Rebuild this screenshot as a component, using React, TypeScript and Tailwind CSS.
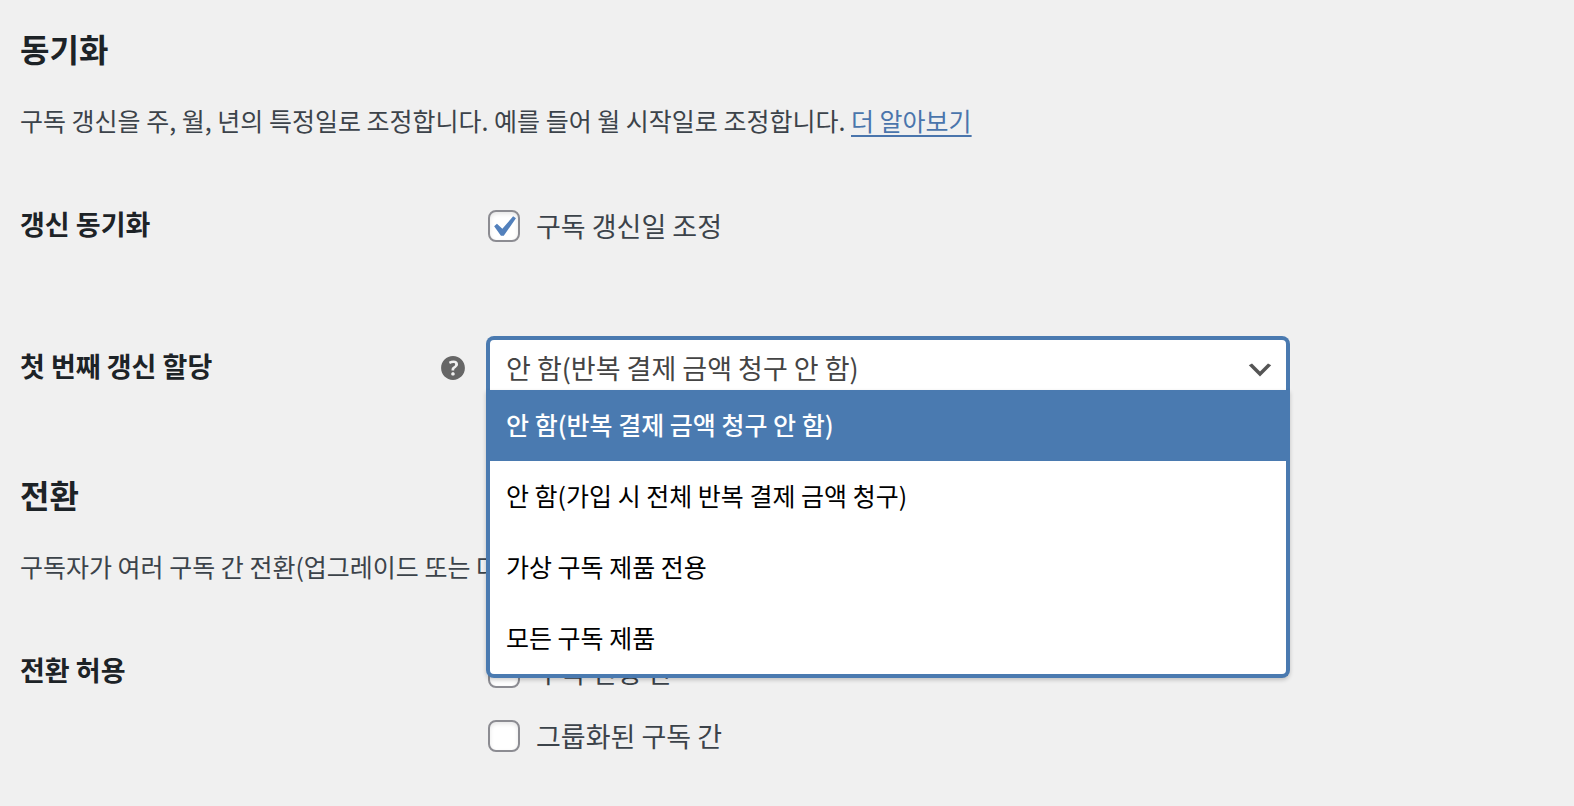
import React, { useState } from 'react';

const OPTIONS = [
    '안 함(반복 결제 금액 청구 안 함)',
    '안 함(가입 시 전체 반복 결제 금액 청구)',
    '가상 구독 제품 전용',
    '모든 구독 제품',
];

const HelpIcon: React.FC<{ className?: string }> = ({ className }) => (
    <svg viewBox="0 0 20 20" fill="currentColor" className={className} aria-hidden="true">
        <path d="M17 10c0-3.87-3.14-7-7-7-3.87 0-7 3.13-7 7s3.13 7 7 7c3.86 0 7-3.13 7-7zm-6.3 1.48H9.14v-.43c0-.38.08-.7.24-.98s.46-.57.88-.89c.41-.29.68-.53.81-.71.14-.18.2-.39.2-.62 0-.25-.09-.44-.28-.58-.19-.13-.45-.19-.79-.19-.58 0-1.25.19-2 .57l-.64-1.28c.87-.49 1.8-.74 2.77-.74.81 0 1.45.2 1.92.58.48.39.71.91.71 1.55 0 .43-.09.8-.29 1.11-.19.32-.57.67-1.11 1.06-.38.28-.61.49-.71.63-.1.15-.15.34-.15.57v.35zm-1.47 2.74c-.18-.17-.27-.42-.27-.73 0-.33.08-.58.26-.75s.43-.25.77-.25c.32 0 .57.09.75.26s.27.42.27.74c0 .3-.09.55-.27.72-.18.18-.43.27-.75.27-.33 0-.58-.09-.76-.26z" />
    </svg>
);

interface CheckboxProps {
    id: string;
    label: string;
    defaultChecked?: boolean;
}

const Checkbox: React.FC<CheckboxProps> = ({ id, label, defaultChecked }) => (
    <label htmlFor={id} className="flex h-8 items-center gap-4 text-[27px] leading-8">
        <span className="relative size-8 shrink-0">
            <input
                id={id}
                type="checkbox"
                defaultChecked={defaultChecked}
                className="peer block size-8 appearance-none rounded-lg border-2 border-[#8c8c92] bg-white shadow-[inset_0_2px_4px_rgba(0,0,0,0.1)]"
            />
            <svg viewBox="0 0 20 20" fill="#5280bc" className="pointer-events-none absolute -left-1.5 -top-1 hidden size-[42px] max-w-none peer-checked:block" aria-hidden="true">
                <path d="M14.83 4.89l1.34.94-5.81 8.38H9.02L5.78 9.67l1.34-1.25 2.57 2.4z" />
            </svg>
        </span>
        {label}
    </label>
);

interface RowProps {
    title: string;
    help?: boolean;
    children: React.ReactNode;
}

const Row: React.FC<RowProps> = ({ title, help, children }) => (
    <div className="grid grid-cols-[468px_1fr] items-start">
        <div className={`flex items-center justify-between pr-[18px] ${help ? 'h-[60px]' : 'h-8'}`}>
            <h3 className="pb-1 text-[27px] font-bold leading-7 text-[#1d2327]">{title}</h3>
            {help && (
                <button type="button" aria-label="도움말" className="text-[#666]">
                    <HelpIcon className="size-[34px]" />
                </button>
            )}
        </div>
        {children}
    </div>
);

const ProrateSelect: React.FC = () => {
    const [value, setValue] = useState(OPTIONS[0]);

    return (
        <div className="relative w-full max-w-[800px]">
            <select
                id="prorate"
                aria-label="첫 번째 갱신 할당"
                value={value}
                onChange={(e) => setValue(e.target.value)}
                className="block h-[60px] w-full appearance-none rounded-md border-2 border-[#4a7ab0] bg-white pl-4 pr-12 text-[27px] text-[#444] outline-none ring-2 ring-[#4a7ab0]"
            >
                {OPTIONS.map((option) => (
                    <option key={option}>{option}</option>
                ))}
            </select>
            <svg viewBox="0 0 20 20" fill="#555" className="pointer-events-none absolute right-3 top-4 size-8" aria-hidden="true">
                <path d="M5 6l5 5 5-5 2 1-7 7-7-7 2-1z" />
            </svg>
            <ul role="listbox" className="absolute -inset-x-0.5 top-[52px] z-10 rounded-b-lg border-4 border-t-0 border-[#4a7ab0] bg-white text-[25px] text-black shadow-[0_2px_4px_rgba(0,0,0,0.2)]">
                {OPTIONS.map((option) => (
                    <li
                        key={option}
                        role="option"
                        aria-selected={option === value}
                        onClick={() => setValue(option)}
                        className="px-4 pb-0.5 leading-[69px] last:rounded-b-sm aria-selected:bg-[#4a7ab0] aria-selected:font-medium aria-selected:text-white"
                    >
                        {option}
                    </li>
                ))}
            </ul>
        </div>
    );
};

const App: React.FC = () => (
    <main className="min-h-screen bg-[#f0f0f0] px-5 pb-[54px] font-['Noto_Sans_CJK_KR',sans-serif] text-[#3c434a]">
        <section className="pt-[30px]">
            <h2 className="pb-1 text-[32px] font-bold leading-9 text-[#1d2327]">동기화</h2>
            <p className="mt-8 text-[25px] leading-9">
                구독 갱신을 주, 월, 년의 특정일로 조정합니다. 예를 들어 월 시작일로 조정합니다.{' '}
                <a href="#learn-more" className="text-[#4a75ac] underline decoration-2 underline-offset-4">더 알아보기</a>
            </p>
            <div className="mt-18 flex flex-col gap-24">
                <Row title="갱신 동기화">
                    <Checkbox id="sync-renewals" label="구독 갱신일 조정" defaultChecked />
                </Row>
                <Row title="첫 번째 갱신 할당" help>
                    <ProrateSelect />
                </Row>
            </div>
        </section>

        <section className="pt-[78px]">
            <h2 className="pb-1 text-[32px] font-bold leading-9 text-[#1d2327]">전환</h2>
            <p className="mt-8 text-[25px] leading-9">
                구독자가 여러 구독 간 전환(업그레이드 또는 다운그레이드)할 수 있습니다.
            </p>
            <div className="mt-18">
                <Row title="전환 허용">
                    <div className="flex flex-col gap-8">
                        <Checkbox id="switch-variations" label="구독 변형 간" />
                        <Checkbox id="switch-grouped" label="그룹화된 구독 간" />
                    </div>
                </Row>
            </div>
        </section>
    </main>
);

export default App;
